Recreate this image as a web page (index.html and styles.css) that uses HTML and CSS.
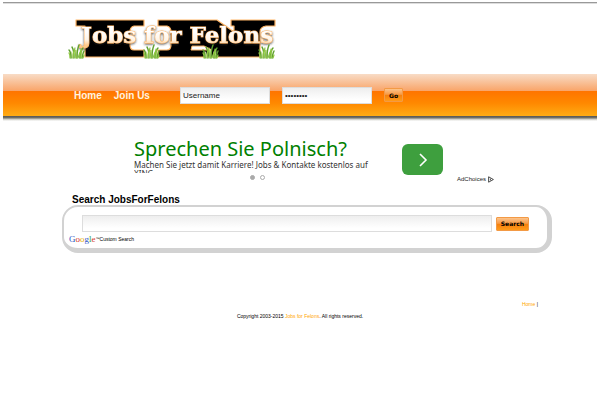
FILE: index.html
```html
<!DOCTYPE html>
<html lang="en">
<head>
  <meta charset="UTF-8">
  <meta name="viewport" content="width=device-width, initial-scale=1">
  <title>Jobs for Felons</title>
  <link rel="stylesheet" href="styles.css">
</head>
<body>

<header class="top">
  <div class="wrap">
    <a href="#" class="logo">
      <svg width="212" height="46" viewBox="0 0 212 46" role="img" aria-label="Jobs for Felons">
        <defs>
          <filter id="glow" x="-10%" y="-30%" width="120%" height="160%">
            <feDropShadow dx="0" dy="1" stdDeviation="1" flood-color="#222" flood-opacity="0.8"/>
          </filter>
          <linearGradient id="letters" x1="0" y1="0" x2="0" y2="1">
            <stop offset="0.4" stop-color="#ffffff"/>
            <stop offset="0.7" stop-color="#fff4e6"/>
            <stop offset="0.9" stop-color="#ffc98a"/>
          </linearGradient>
          <g id="grass" fill="none" stroke-linecap="round">
            <path stroke="#c9dfa0" stroke-width="3" d="M3 13L2 9M7 13V7M11 13L12 8"/>
            <path stroke="#5f9f2f" stroke-width="1.4" d="M2 14Q2 8 0 6M5 14Q5 6 3 3M8 14Q8 6 10 1M11 14Q11 7 14 4M13 14Q14 9 15 7"/>
            <path stroke="#8cc63f" stroke-width="1.2" d="M1 14Q1 10 0 9M4 14Q4 8 6 4M7 14Q6 8 6 6M9 14Q10 9 13 6M12 14Q12 10 12 5M14 14Q15 11 15 11"/>
          </g>
        </defs>
        <!-- big slab letters behind the name -->
        <g fill="#000" stroke="#ffb566" stroke-width="1.2" stroke-linejoin="round">
          <path d="M8 5H76V11H66Q62 12 62 17V30Q62 35 66 35H76V42H17V35V11H8Z"/>
          <path d="M90 5H149L166 17V11H163V5H207V11H198Q192 12 192 17V42H90V35H99Q103 35 103 30V17Q103 12 99 11H90Z"/>
        </g>
        <path d="M123 35L124 31H136L144 35Z" fill="#fff" stroke="#ffb566"/>
        <g class="logo-text" filter="url(#glow)">
          <text x="13" y="28" fill="url(#letters)" stroke="#ffb566" stroke-width="1" paint-order="stroke">Jobs for Felons</text>
        </g>
        <use href="#grass" x="1" y="29"/>
        <use href="#grass" x="76" y="29"/>
        <use href="#grass" x="135" y="29"/>
        <use href="#grass" x="191" y="29"/>
      </svg>
    </a>
  </div>
</header>

<div class="bar">
  <div class="wrap bar-inner">
    <nav>
      <a href="#">Home</a>
      <a href="#">Join Us</a>
    </nav>
    <form class="login">
      <input type="text" value="Username" aria-label="Username">
      <input type="password" value="password" aria-label="Password">
      <button type="submit" class="btn">Go</button>
    </form>
  </div>
</div>

<main class="wrap">
  <section class="ad">
    <div class="ad-text">
      <a href="#" class="ad-title">Sprechen Sie Polnisch?</a>
      <p>Machen Sie jetzt damit Karriere! Jobs &amp; Kontakte kostenlos auf XING</p>
      <div class="dots"><span class="dot on"></span><span class="dot"></span></div>
    </div>
    <div class="ad-side">
      <button type="button" class="ad-go" aria-label="Open">
        <svg width="10" height="14" viewBox="0 0 10 14"><path d="M2 1L8 7L2 13" fill="none" stroke="#fff" stroke-width="1.6"/></svg>
      </button>
      <a href="#" class="choices">AdChoices
        <svg width="6" height="7" viewBox="0 0 6 7"><path d="M.6 .8L5.4 3.5L.6 6.2ZM2.4 2.6V4.4" fill="none" stroke="#222" stroke-width=".8"/></svg>
      </a>
    </div>
  </section>

  <h2>Search JobsForFelons</h2>
  <form class="search">
    <div class="search-row">
      <input type="text" aria-label="Search">
      <button type="submit" class="btn">Search</button>
    </div>
    <div class="powered">
      <span class="google"><i class="b">G</i><i class="r">o</i><i class="y">o</i><i class="b">g</i><i class="g">l</i><i class="r">e</i></span><sup>™</sup>
      <span>Custom Search</span>
    </div>
  </form>
</main>

<footer class="wrap">
  <p class="links"><a href="#">Home</a> |</p>
  <p class="copy">Copyright 2003-2015 <a href="#">Jobs for Felons</a>. All rights reserved.</p>
</footer>

</body>
</html>
```
FILE: styles.css
```css
* {
  box-sizing: border-box;
}
body {
  margin: 2px 3px 0;
  background: #fff;
  color: #000;
  font-family: "Liberation Sans", Arial, sans-serif;
}
a {
  text-decoration: none;
}
.wrap {
  max-width: 476px;
  margin: 0 auto;
}

/* Header */
.top {
  height: 72px;
  border-top: 1px solid #999;
  box-shadow: inset 0 1px #ddd;
}
.logo {
  display: block;
  padding: 12px 0 0 6px;
}
.logo svg {
  display: block;
}
.logo-text {
  font-family: "DejaVu Serif", serif;
  font-weight: bold;
  font-size: 23px;
}

/* Orange bar */
.bar {
  height: 47px;
  background: linear-gradient(#f8dcc6 0, #f9a468 17px, #ff7400 17px, #ff8800 29px, #ffac14 42px, #555 42px, #77776c 44px, #c5c5bd 45px, #fff 47px);
}
.bar-inner {
  display: flex;
  align-items: center;
  height: 42px;
  padding-left: 12px;
}
nav {
  display: flex;
  gap: 12px;
  width: 106px;
}
nav a {
  color: #fff3e0;
  font-size: 10px;
  font-weight: bold;
}
.login {
  display: flex;
  align-items: center;
  gap: 12px;
}
input {
  border: 1px solid #ddd;
  background: linear-gradient(#eee, #fff 12px);
  font-family: "Liberation Sans", Arial, sans-serif;
  font-size: 8px;
  color: #222;
}
.login input {
  width: 90px;
  height: 17px;
  padding: 0 2px;
}
.btn {
  border: 1px solid #f39a45;
  border-radius: 1px;
  background: linear-gradient(#fcc48c, #f79a45 45%, #f57f0c 50%, #ff9b1a);
  font-family: "DejaVu Sans", sans-serif;
  font-weight: bold;
  font-size: 6px;
  height: 14px;
  padding: 0 4px;
  color: #000;
}

/* Advert */
.ad {
  display: flex;
  height: 73px;
  padding: 16px 0 0 72px;
}
.ad-text {
  width: 268px;
  font-family: "Noto Sans", sans-serif;
}
.ad-title {
  display: block;
  color: #008000;
  font-size: 20px;
  line-height: 23px;
  white-space: nowrap;
}
.ad-text p {
  margin: 0;
  height: 13px;
  padding-right: 20px;
  overflow: hidden;
  color: #333;
  font-size: 8px;
  line-height: 9px;
}
.dots {
  display: flex;
  justify-content: center;
  gap: 5px;
  padding: 2px 22px 0 0;
}
.dot {
  width: 5px;
  height: 5px;
  border: 1px solid #aaa;
  border-radius: 50%;
}
.dot.on {
  background: #aaa;
}
.ad-side {
  display: flex;
  flex-direction: column;
  align-items: flex-start;
  padding-top: 7px;
}
.ad-go {
  display: flex;
  align-items: center;
  justify-content: center;
  width: 41px;
  height: 31px;
  border: 0;
  border-radius: 6px;
  background: #3e9f3e;
}
.choices {
  display: flex;
  align-items: center;
  gap: 2px;
  margin-left: 55px;
  color: #222;
  font-size: 6px;
  line-height: 8px;
}

/* Search box */
h2 {
  margin: 0 0 0 10px;
  font-size: 10px;
  line-height: 11px;
}
.search {
  margin-right: -14px;
  border: solid #d2d2d2;
  border-width: 2px 5px 5px 2px;
  border-radius: 16px;
  padding: 8px 18px 3px 5px;
}
.search-row {
  display: flex;
  align-items: center;
  gap: 4px;
  padding-left: 13px;
}
.search-row input {
  flex: 1;
  min-width: 0;
  height: 17px;
}
.powered {
  display: flex;
  align-items: center;
  height: 13px;
  font-size: 5px;
}
.powered sup {
  font-size: 4px;
}
.google {
  font-family: "Liberation Serif", serif;
  font-size: 9px;
}
.google i {
  font-style: normal;
}
.b { color: #2a56c6; }
.r { color: #d93a2b; }
.y { color: #e8b10c; }
.g { color: #2f9e44; }

/* Footer */
footer {
  padding-top: 48px;
  font-size: 5px;
  line-height: 6px;
}
footer p {
  margin: 0;
}
footer a {
  color: #ffa500;
}
.links {
  text-align: right;
}
.copy {
  padding-top: 6px;
  text-align: center;
}
```
